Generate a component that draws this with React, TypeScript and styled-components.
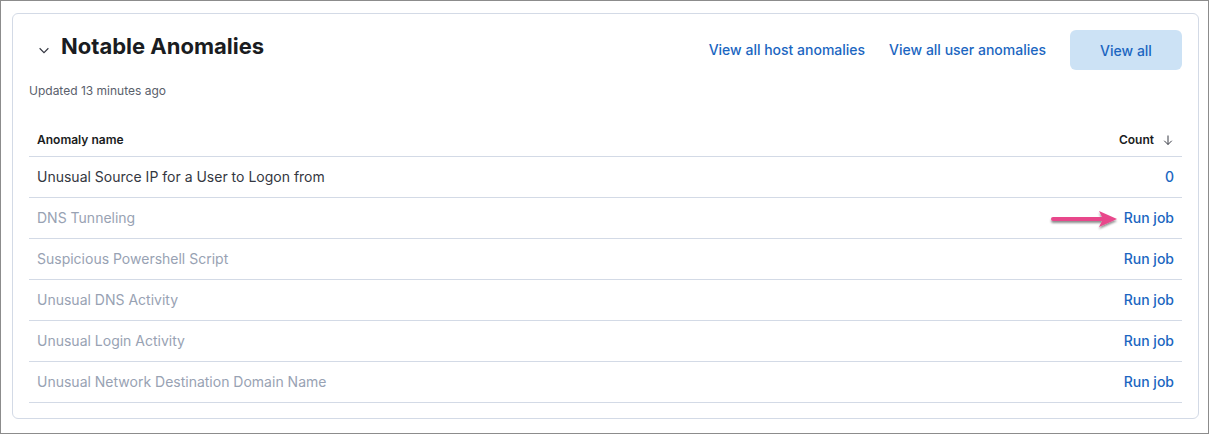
import React from "react";
import styled, { createGlobalStyle } from "styled-components";

const Global = createGlobalStyle`
  html, body { margin: 0; padding: 0; background: #fff; }
  body { font-family: Inter, "Noto Sans", sans-serif; -webkit-font-smoothing: antialiased; }
  * { box-sizing: border-box; }
`;

const Frame = styled.div`
  width: 1209px;
  height: 434px;
  border: 1px solid #8c8c8c;
  padding: 12px 9px 14px 11px;
  background: #fff;
`;

const Panel = styled.section`
  position: relative;
  border: 1px solid #d3dae6;
  border-radius: 6px;
  padding: 16px;
  height: 100%;
`;

const Header = styled.div`
  display: flex;
  align-items: flex-start;
  justify-content: space-between;
  height: 40px;
`;

const TitleGroup = styled.div`
  display: flex;
  align-items: center;
  gap: 10px;
  padding-left: 8px;
  height: 32px;
`;

const Chevron = styled.svg`
  width: 14px;
  height: 14px;
  margin-top: 8px;
  flex-shrink: 0;
`;

const Title = styled.h2`
  margin: 0;
  font-size: 22px;
  line-height: 32px;
  font-weight: 700;
  color: #1a1c21;
`;

const Actions = styled.div`
  display: flex;
  align-items: center;
  height: 40px;
  gap: 24px;
`;

const HeaderLink = styled.a`
  font-size: 14px;
  font-weight: 500;
  color: #1b66c1;
  text-decoration: none;
  line-height: 20px;
`;

const PrimaryButton = styled.button`
  width: 112px;
  height: 40px;
  border: none;
  border-radius: 6px;
  background: #cce2f5;
  color: #1b66c1;
  font-family: inherit;
  font-size: 14px;
  font-weight: 500;
  cursor: pointer;
`;

const Updated = styled.div`
  margin-top: 13px;
  font-size: 12px;
  line-height: 16px;
  color: #5a606b;
`;

const Table = styled.table`
  width: 100%;
  margin-top: 25px;
  border-collapse: collapse;
`;

const Th = styled.th<{ $align?: "left" | "right" }>`
  text-align: ${(p) => p.$align || "left"};
  font-size: 12px;
  font-weight: 600;
  color: #1a1c21;
  height: 32px;
  padding: 0 8px;
  border-bottom: 1px solid #d3dae6;
`;

const SortLabel = styled.span`
  display: inline-flex;
  align-items: center;
  gap: 8px;
`;

const Td = styled.td<{ $align?: "left" | "right"; $muted?: boolean }>`
  text-align: ${(p) => p.$align || "left"};
  font-size: 14px;
  color: ${(p) => (p.$muted ? "#98a2b3" : "#343741")};
  height: 41px;
  padding: 0 8px;
  border-bottom: 1px solid #d3dae6;
`;

const CellLink = styled.a`
  color: #1b66c1;
  font-weight: 500;
  text-decoration: none;
`;

const Pointer = styled.svg`
  position: absolute;
  left: 1037px;
  top: 194px;
  width: 70px;
  height: 24px;
  overflow: visible;
`;

const rows = [
  { name: "Unusual Source IP for a User to Logon from", count: "0" },
  { name: "DNS Tunneling" },
  { name: "Suspicious Powershell Script" },
  { name: "Unusual DNS Activity" },
  { name: "Unusual Login Activity" },
  { name: "Unusual Network Destination Domain Name" },
];

export default function App() {
  return (
    <>
      <Global />
      <Frame>
        <Panel>
          <Header>
            <TitleGroup>
              <Chevron viewBox="0 0 16 16">
                <path d="M3 6l5 5 5-5" fill="none" stroke="#343741" strokeWidth="1.3" />
              </Chevron>
              <Title>Notable Anomalies</Title>
            </TitleGroup>
            <Actions>
              <HeaderLink href="#">View all host anomalies</HeaderLink>
              <HeaderLink href="#">View all user anomalies</HeaderLink>
              <PrimaryButton>View all</PrimaryButton>
            </Actions>
          </Header>
          <Updated>Updated 13 minutes ago</Updated>
          <Table>
            <thead>
              <tr>
                <Th>Anomaly name</Th>
                <Th $align="right">
                  <SortLabel>
                    Count
                    <svg width="12" height="12" viewBox="0 0 16 16">
                      <path d="M8 2v12M3 9l5 5 5-5" fill="none" stroke="#343741" strokeWidth="1.3" />
                    </svg>
                  </SortLabel>
                </Th>
              </tr>
            </thead>
            <tbody>
              {rows.map((r) => (
                <tr key={r.name}>
                  <Td $muted={!r.count}>{r.name}</Td>
                  <Td $align="right">
                    <CellLink href="#">{r.count ?? "Run job"}</CellLink>
                  </Td>
                </tr>
              ))}
            </tbody>
          </Table>
          <Pointer viewBox="0 0 70 24">
            <defs>
              <filter id="sh" x="-20%" y="-50%" width="140%" height="200%">
                <feDropShadow dx="0" dy="2" stdDeviation="1.2" floodColor="#000" floodOpacity="0.45" />
              </filter>
            </defs>
            <g filter="url(#sh)">
              <path d="M3 11 H52" stroke="#e8478b" strokeWidth="4" strokeLinecap="round" />
              <path d="M49 3 L67 11 L49 19 L53 11 Z" fill="#e8478b" />
            </g>
          </Pointer>
        </Panel>
      </Frame>
    </>
  );
}
